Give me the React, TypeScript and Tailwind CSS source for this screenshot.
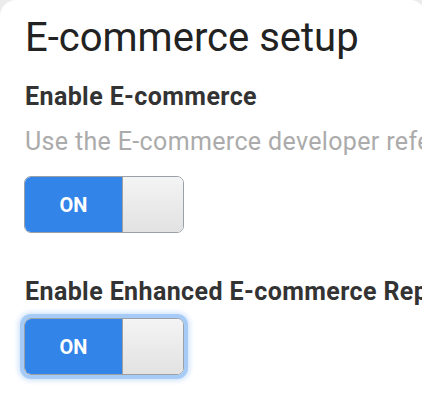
import React from "react";

const font = { fontFamily: "Roboto, 'Liberation Sans', sans-serif" };

const Toggle: React.FC<{ focused?: boolean }> = ({ focused }) => {
  return (
    <div
      className={
        "flex h-[57px] w-[160px] overflow-hidden rounded-[7px] border border-[#9aa0a6] " +
        (focused ? "shadow-[0_0_0_4px_#a6cbf7,0_0_5px_6px_#d3e5fc]" : "")
      }
    >
      <div className="flex w-[97px] items-center justify-center bg-[#3384e8] text-[20px] font-bold text-white">
        ON
      </div>
      <div className="flex-1 border-l border-[#a0a0a0] bg-gradient-to-b from-[#f4f4f4] to-[#e2e2e2]" />
    </div>
  );
};

export default function App() {
  return (
    <div className="h-[406px] w-[422px] overflow-hidden bg-[#ececec]" style={font}>
      <div className="h-full w-[426px] rounded-t-[16px] bg-white pl-[25px]">
        <h1 className="pt-[18px] text-[40px] leading-none text-[#222]">E-commerce setup</h1>
        <div className="mt-[26px] text-[25px] font-bold leading-none tracking-[0.4px] text-[#333]">
          Enable E-commerce
        </div>
        <div className="mt-[20px] whitespace-nowrap text-[25px] leading-none tracking-[0.35px] text-[#ababab]">
          Use the E-commerce developer reference guide
        </div>
        <div className="mt-[22px] -ml-[1px]">
          <Toggle />
        </div>
        <div className="mt-[46px] whitespace-nowrap text-[25px] font-bold leading-none tracking-[0.4px] text-[#333]">
          Enable Enhanced E-commerce Reporting
        </div>
        <div className="mt-[14px] -ml-[1px]">
          <Toggle focused />
        </div>
      </div>
    </div>
  );
}
